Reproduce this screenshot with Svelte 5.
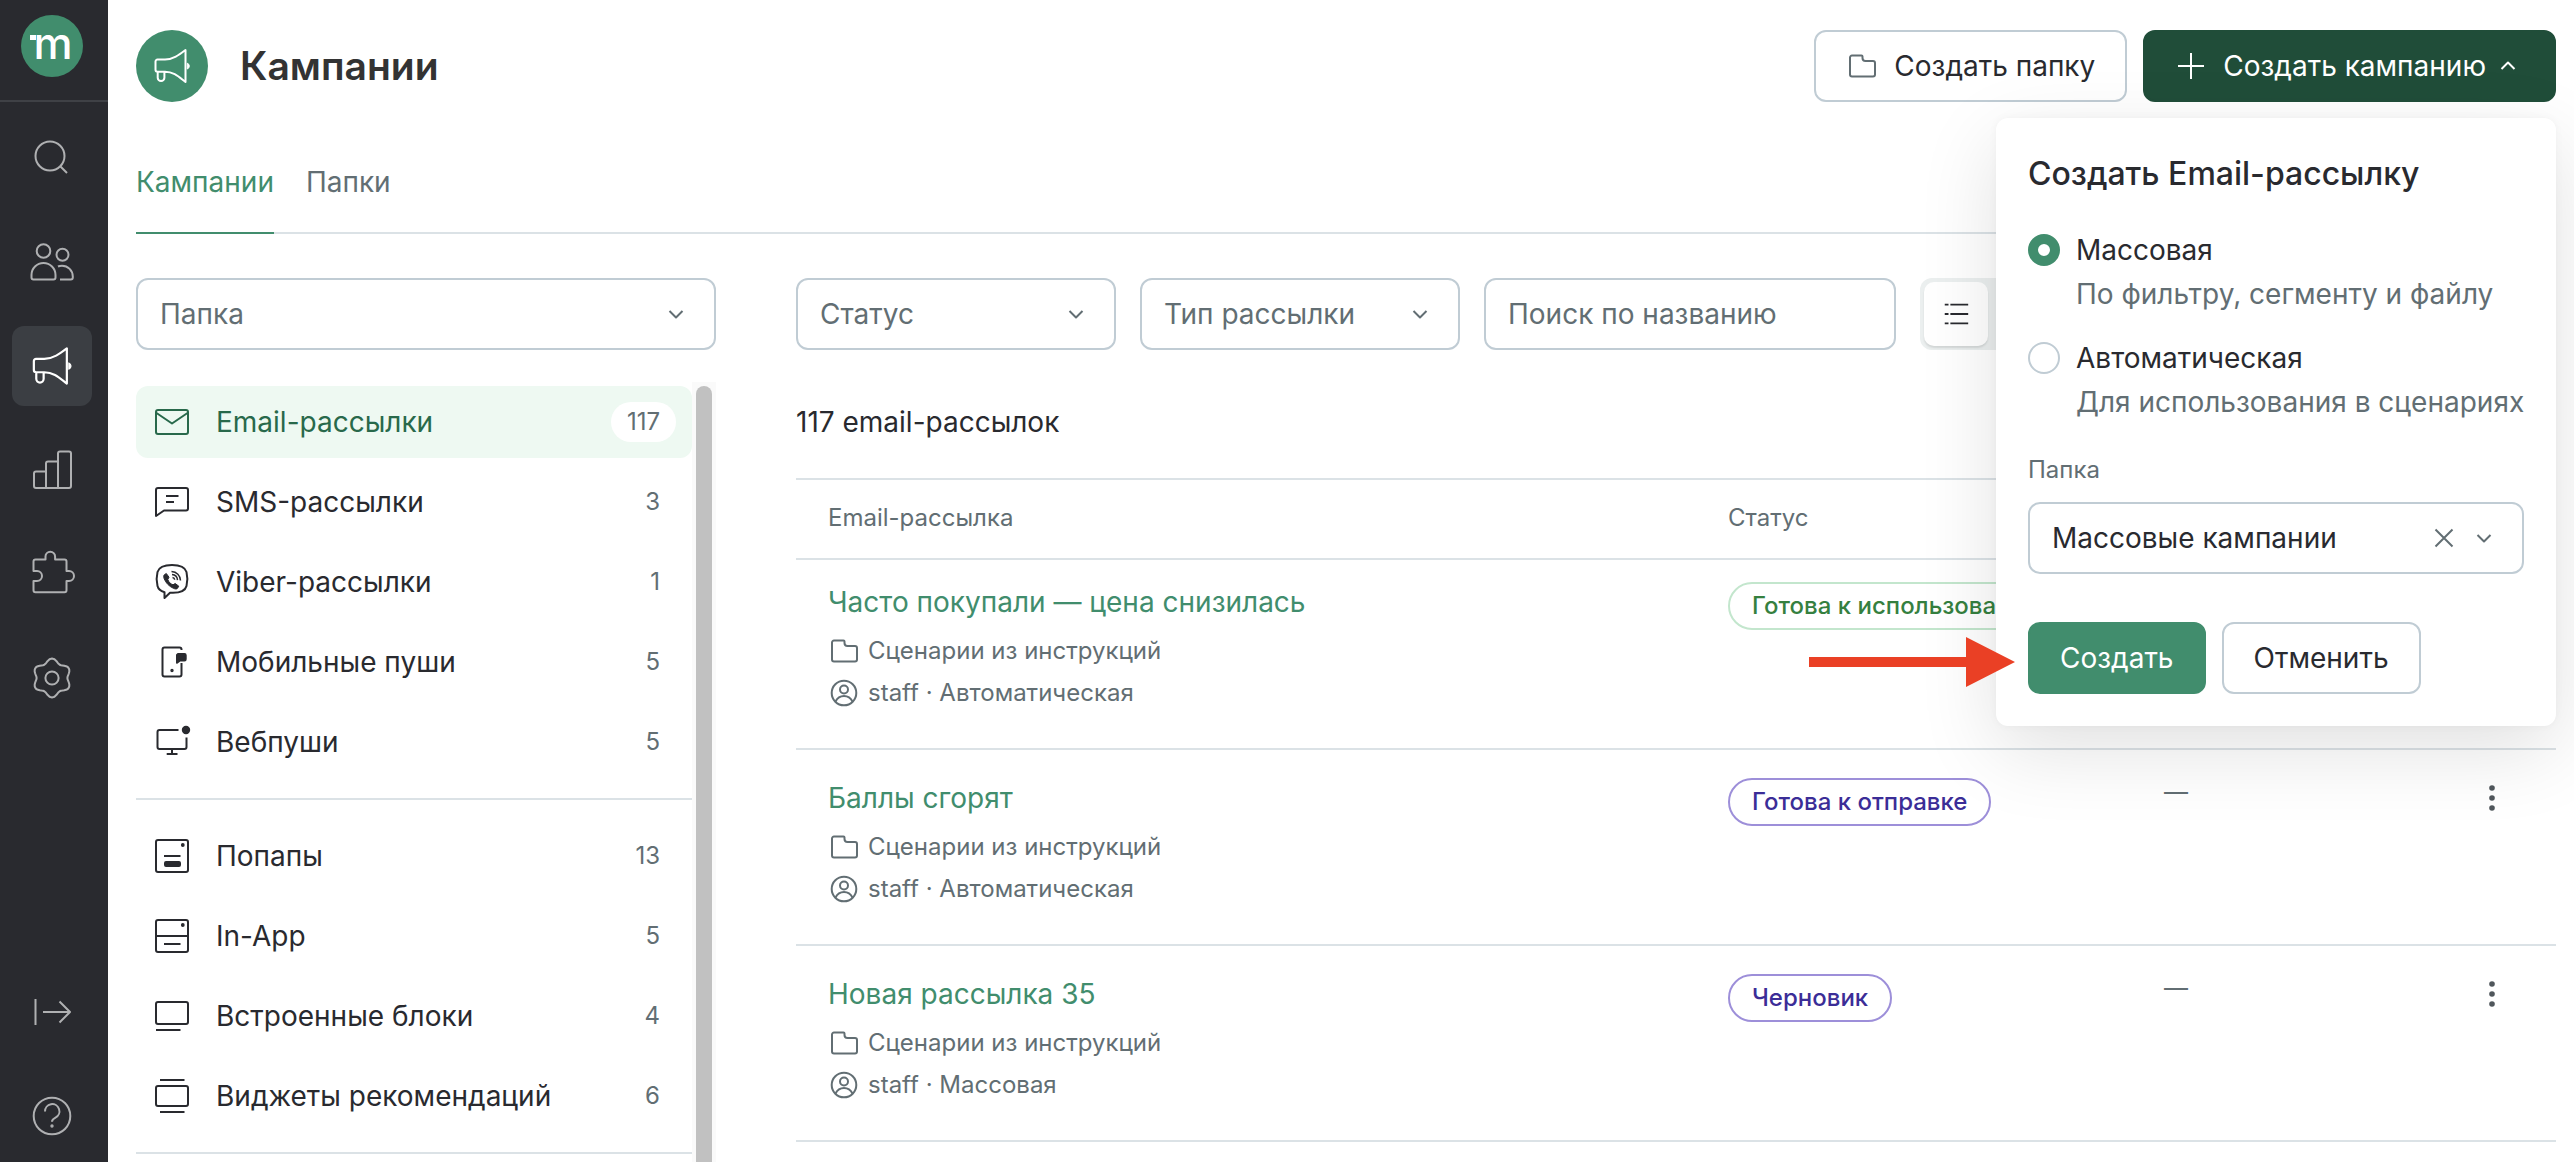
<script>
    const icons = {
        search: `<circle cx="22" cy="22" r="14.5"/><path d="M32 32l7 7"/>`,
        people: `<circle cx="15.5" cy="13" r="6.8"/><circle cx="34.5" cy="16.7" r="6"/><path d="M5.5 41.5h20a2 2 0 0 0 2-2V37a12 12 0 0 0-24 0v2.5a2 2 0 0 0 2 2zM30 28.5c1-.5 2.5-.8 4-.8a10.8 10.8 0 0 1 10.8 10.8v1a2 2 0 0 1-2 2H32"/>`,
        megaphone: `<path d="M3.5 15.5a2 2 0 0 1 2-2H13c8 0 14.5-5 20.5-9.5v32C27 31 22 25.7 13 25.7H5.5a2 2 0 0 1-2-2zM5.7 25.7v6a3.3 3.3 0 0 0 6.7 0v-6"/><path d="M35.3 17.2a3.1 3.1 0 0 1 0 5.8z" fill="currentColor" stroke-width="1"/>`,
        chart: `<path d="M18 42V17.5a2 2 0 0 1 2-2h10M30 42V7.5a2 2 0 0 1 2-2h9a2 2 0 0 1 2 2V40a2 2 0 0 1-2 2H8a2 2 0 0 1-2-2V27.5a2 2 0 0 1 2-2h10"/>`,
        puzzle: `<path d="M7.5 9.5h10v-3a4.8 4.8 0 0 1 9.6 0v3h9.4a2 2 0 0 1 2 2V21H41a5 5 0 0 1 0 10h-2.5v9.3a2 2 0 0 1-2 2h-29a2 2 0 0 1-2-2v-9.3H9a5 5 0 0 0 0-10H5.5V11.5a2 2 0 0 1 2-2z"/>`,
        gear: `<circle cx="24" cy="24" r="6.6"/><path d="${gearPath()}"/>`,
        expand: `<path d="M7.5 11v26M15 24h27M31.5 13.5L42 24 31.5 34.5"/>`,
        help: `<circle cx="24" cy="24" r="18.3"/><path d="M17 19.5a7.2 7.2 0 1 1 10.5 6.2c-2.2 1.2-3.5 2-3.5 4"/><circle cx="24" cy="34" r=".7" fill="currentColor"/>`,
        email: `<rect x="4" y="8" width="32" height="24" rx="2"/><path d="M4.500 11L20 21.500 35.500 11"/>`,
        sms: `<path d="M6 6h28a2 2 0 0 1 2 2v18.500a2 2 0 0 1-2 2H12L4 34V8a2 2 0 0 1 2-2zM14 14h12.500M14 20h8"/>`,
        viber: `<path d="M20 3c9 0 13 2 14.500 7 1 4 1 10 0 14-1.300 5-6 7-14.500 6.800h-2L12.500 36v-5.800C8.500 29 6.300 27.300 5.500 24c-1-4-1-10 0-14C7 5 11 3 20 3z"/><path d="M12.300 12.800l2-1.300 2.700 3.700-1.200 2.300c1 2.800 2.500 4.200 5.200 5.300l2.200-1.300 3.600 2.700-1.400 2.200c-1.200 1-2.600.5-4-.1-4.400-2-7.400-5.200-9.200-9.500-.6-1.600-.8-3 .1-4z" fill="currentColor" stroke-width="1"/><path d="M19.500 9.500c5.200.2 8.800 4 9 9M20 12.600c3.200.3 5.300 2.400 5.500 5.500M20.500 15.600c1.400.2 2.100.9 2.200 2.200" stroke-width="1.500"/>`,
        mobile: `<path d="M29.500 8v-.5a2 2 0 0 0-2-2h-15a2 2 0 0 0-2 2v25a2 2 0 0 0 2 2h15a2 2 0 0 0 2-2V21"/><path d="M26 12h6.500a1.200 1.200 0 0 1 1.200 1.200v4a1.200 1.200 0 0 1-1.200 1.200H28l-3 2.400V13z" fill="currentColor"/><circle cx="20" cy="28.500" r=".7" fill="currentColor"/>`,
        web: `<path d="M26.500 8h-19a2 2 0 0 0-2 2v15a2 2 0 0 0 2 2h25a2 2 0 0 0 2-2v-9.500M20 27v5M14.700 32h10.800"/><circle cx="34" cy="8" r="3.200" fill="currentColor"/>`,
        popup: `<rect x="4" y="4" width="32" height="32" rx="2"/><circle cx="30.800" cy="9" r=".9" fill="currentColor"/><path d="M12 20h16.500"/><rect x="13" y="26" width="15" height="4" rx="1" fill="currentColor"/>`,
        inapp: `<rect x="4" y="4" width="32" height="32" rx="2"/><circle cx="30.800" cy="9" r=".9" fill="currentColor"/><path d="M4 20h32M12 28h16.500"/>`,
        blocks: `<rect x="4" y="6" width="32" height="22" rx="2"/><path d="M4 34h24.500"/>`,
        widgets: `<rect x="4" y="10" width="32" height="20" rx="2"/><path d="M8 4h24.500M8 36h24.500"/>`,
        folder: `<path d="M6 5.500h9.500a1 1 0 0 1 1 1V8a3 3 0 0 0 3 3H27a2 2 0 0 1 2 2v11.500a2 2 0 0 1-2 2H6a2 2 0 0 1-2-2v-17a2 2 0 0 1 2-2z"/>`,
        user: `<circle cx="16" cy="16" r="12.300"/><circle cx="16" cy="12.500" r="4"/><path d="M7.500 24.500c2-4 5-5.500 8.500-5.500s6.500 1.500 8.500 5.500"/>`,
        plus: `<path d="M16 3v26M3 16h26"/>`,
        down: `<path d="M9.500 13l6.500 6.500 6.500-6.500"/>`,
        up: `<path d="M9.500 19l6.500-6.500 6.500 6.500"/>`,
        cross: `<path d="M7.500 7.500l17 17M24.500 7.500l-17 17"/>`,
        list: `<path d="M4 6h4M10 6h19M4 16h4M10 16h19M4 26h4M10 26h19"/>`,
        dots: `<g fill="currentColor" stroke="none"><circle cx="16" cy="6" r="2.800"/><circle cx="16" cy="16" r="2.800"/><circle cx="16" cy="26" r="2.800"/></g>`,
    };

    // six soft teeth, one pointing up
    function gearPath() {
        let d = "";
        for (let i = 0; i < 72; i++) {
            const a = (i * Math.PI) / 36;
            const r = 17.4 + 2 * Math.cos(6 * a);
            d += (i ? "L" : "M") + (24 + r * Math.sin(a)).toFixed(1) + " " + (24 - r * Math.cos(a)).toFixed(1);
        }
        return d + "z";
    }

    const sections = [
        { icon: "search", title: "Поиск" },
        { icon: "people", title: "Клиенты" },
        { icon: "megaphone", title: "Кампании", active: true },
        { icon: "chart", title: "Отчеты" },
        { icon: "puzzle", title: "Интеграции" },
        { icon: "gear", title: "Настройки" },
    ];

    const groups = [
        [
            { icon: "email", name: "Email-рассылки", count: 117, active: true },
            { icon: "sms", name: "SMS-рассылки", count: 3 },
            { icon: "viber", name: "Viber-рассылки", count: 1 },
            { icon: "mobile", name: "Мобильные пуши", count: 5 },
            { icon: "web", name: "Вебпуши", count: 5 },
        ],
        [
            { icon: "popup", name: "Попапы", count: 13 },
            { icon: "inapp", name: "In-App", count: 5 },
            { icon: "blocks", name: "Встроенные блоки", count: 4 },
            { icon: "widgets", name: "Виджеты рекомендаций", count: 6 },
        ],
    ];

    const campaigns = [
        { name: "Часто покупали — цена снизилась", type: "Автоматическая", status: "Готова к использованию", ready: true },
        { name: "Баллы сгорят", type: "Автоматическая", status: "Готова к отправке" },
        { name: "Новая рассылка 35", type: "Массовая", status: "Черновик" },
    ];

    let kind = $state("mass");
    let open = $state(true);
</script>

{#snippet icon(name, size, box = size)}
    <svg
        class="icon"
        width={size}
        height={size}
        viewBox="0 0 {box} {box}"
        fill="none"
        stroke="currentColor"
        stroke-width="2"
        aria-hidden="true">{@html icons[name]}</svg
    >
{/snippet}

<div class="app">
    <aside class="sidebar">
        <a href="#home" class="logo" aria-label="Главная">
            <svg width="62" height="62" viewBox="0 0 62 62">
                <circle cx="31" cy="31" r="31" />
                <text x="32" y="44" text-anchor="middle">m</text>
                <rect x="9" y="20" width="6" height="5" />
            </svg>
        </a>
        <nav class="sections">
            {#each sections as s}
                <a href="#{s.icon}" class="section" class:active={s.active} aria-label={s.title}>
                    {#if s.icon == "megaphone"}
                        {@render icon(s.icon, 44, 40)}
                    {:else}
                        {@render icon(s.icon, 48)}
                    {/if}
                </a>
            {/each}
        </nav>
        <nav class="sections bottom">
            <a href="#expand" class="section" aria-label="Развернуть">{@render icon("expand", 48)}</a>
            <a href="#help" class="section" aria-label="Помощь">{@render icon("help", 48)}</a>
        </nav>
    </aside>

    <main>
        <header>
            <span class="round">{@render icon("megaphone", 40)}</span>
            <h1>Кампании</h1>
            <button class="btn outline">
                <span class="muted">{@render icon("folder", 32)}</span>
                Создать папку
            </button>
            <div class="create">
                <button class="btn dark" onclick={() => (open = !open)}>
                    {@render icon("plus", 32)}
                    Создать кампанию
                    <span class="caret">{@render icon("up", 32)}</span>
                </button>
                {#if open}
                    <form class="popup">
                        <h2>Создать Email-рассылку</h2>
                        <label class="option">
                            <input type="radio" name="kind" value="mass" bind:group={kind} />
                            <span>Массовая</span>
                            <small>По фильтру, сегменту и файлу</small>
                        </label>
                        <label class="option">
                            <input type="radio" name="kind" value="auto" bind:group={kind} />
                            <span>Автоматическая</span>
                            <small>Для использования в сценариях</small>
                        </label>
                        <label class="field-label" for="folder">Папка</label>
                        <div class="select filled">
                            <select id="folder">
                                <option>Массовые кампании</option>
                            </select>
                            <span class="marks">
                                {@render icon("cross", 32)}
                                {@render icon("down", 32)}
                            </span>
                        </div>
                        <div class="actions">
                            <button type="button" class="btn green">Создать</button>
                            <button type="button" class="btn outline" onclick={() => (open = false)}>Отменить</button>
                        </div>
                        <svg class="arrow" width="206" height="50" viewBox="0 0 206 50" aria-hidden="true">
                            <path d="M0 20h157V0l49 25-49 25V30H0z" />
                        </svg>
                    </form>
                {/if}
            </div>
        </header>

        <nav class="tabs">
            <a href="#campaigns" class="current">Кампании</a>
            <a href="#folders">Папки</a>
        </nav>

        <div class="columns">
            <div class="left">
                <div class="select">
                    <select aria-label="Папка">
                        <option>Папка</option>
                    </select>
                    <span class="marks">{@render icon("down", 32)}</span>
                </div>
                <div class="channels">
                    <nav>
                        {#each groups as group}
                            <div class="group">
                                {#each group as c}
                                    <a href="#{c.icon}" class="channel" class:active={c.active}>
                                        {@render icon(c.icon, 40)}
                                        {c.name}
                                        <span class="count">{c.count}</span>
                                    </a>
                                {/each}
                            </div>
                        {/each}
                    </nav>
                    <div class="track"><div class="thumb"></div></div>
                </div>
            </div>

            <div class="right">
                <div class="filters">
                    <div class="select">
                        <select aria-label="Статус">
                            <option>Статус</option>
                        </select>
                        <span class="marks">{@render icon("down", 32)}</span>
                    </div>
                    <div class="select">
                        <select aria-label="Тип рассылки">
                            <option>Тип рассылки</option>
                        </select>
                        <span class="marks">{@render icon("down", 32)}</span>
                    </div>
                    <input type="text" placeholder="Поиск по названию" aria-label="Поиск по названию" />
                    <div class="toggle">
                        <button aria-label="Список">{@render icon("list", 30, 32)}</button>
                    </div>
                </div>
                <p class="total">117 email-рассылок</p>
                <table>
                    <thead>
                        <tr>
                            <th class="name">Email-рассылка</th>
                            <th class="status">Статус</th>
                            <th></th>
                            <th class="menu"></th>
                        </tr>
                    </thead>
                    <tbody>
                        {#each campaigns as c}
                            <tr>
                                <td>
                                    <a href="#campaign" class="title">{c.name}</a>
                                    <div class="meta">{@render icon("folder", 32)} Сценарии из инструкций</div>
                                    <div class="meta">{@render icon("user", 32)} staff · {c.type}</div>
                                </td>
                                <td><span class="badge" class:ready={c.ready}>{c.status}</span></td>
                                <td class="dash">—</td>
                                <td><button class="dots" aria-label="Действия">{@render icon("dots", 32)}</button></td>
                            </tr>
                        {/each}
                    </tbody>
                </table>
            </div>
        </div>
    </main>
</div>

<style>
    :global(body) {
        background: #fff;
        color: #292a2f;
        font-family: Inter, "Liberation Sans", sans-serif;
        font-size: 28px;
        line-height: 40px;
    }

    .app,
    .app * {
        box-sizing: border-box;
    }

    .app {
        display: flex;
        height: 100vh;
        overflow: hidden;
    }

    a {
        color: inherit;
        text-decoration: none;
    }

    button,
    input,
    select {
        font: inherit;
        color: inherit;
    }

    .icon {
        display: block;
        flex: none;
        stroke-linejoin: round;
    }

    .sidebar {
        display: flex;
        flex-direction: column;
        flex: none;
        width: 108px;
        background: #292a2f;
        color: #afb0b2;
    }

    .logo {
        height: 102px;
        padding: 15px 0 0 21px;
        border-bottom: 2px solid #3f4146;
    }

    .logo svg {
        display: block;
    }

    .logo circle {
        fill: #418d6d;
    }

    .logo text,
    .logo rect {
        fill: #fff;
    }

    .logo text {
        font-size: 44px;
        font-weight: 500;
    }

    .sections {
        display: flex;
        flex-direction: column;
        gap: 24px;
        padding: 16px 16px 0 12px;
    }

    .sections.bottom {
        margin-top: auto;
        padding-bottom: 6px;
    }

    .section {
        display: flex;
        align-items: center;
        justify-content: center;
        height: 80px;
        border-radius: 12px;
    }

    .section.active {
        background: #3b3e43;
        color: #fff;
    }

    main {
        display: flex;
        flex-direction: column;
        flex: 1;
        min-width: 0;
        padding: 30px 18px 0 28px;
    }

    header {
        display: flex;
        align-items: center;
        gap: 16px;
    }

    .round {
        display: flex;
        align-items: center;
        justify-content: center;
        width: 72px;
        height: 72px;
        border-radius: 50%;
        background: #418d6d;
        color: #fff;
    }

    h1 {
        margin: 0 auto 0 16px;
        color: #333;
        font-size: 39px;
        font-weight: 600;
        line-height: 72px;
    }

    .btn {
        display: flex;
        align-items: center;
        gap: 16px;
        height: 72px;
        padding: 0 30px;
        border: 2px solid transparent;
        border-radius: 12px;
        background: #fff;
        white-space: nowrap;
        cursor: pointer;
    }

    .btn.outline {
        border-color: #c0ccd4;
    }

    .btn.dark {
        background: #204d39;
        border-color: #204d39;
        color: #fff;
    }

    .btn.green {
        background: #418d6d;
        border-color: #418d6d;
        color: #fff;
    }

    .muted {
        color: #626e73;
    }

    .caret {
        margin-left: -10px;
    }

    .create {
        position: relative;
    }

    .popup {
        position: absolute;
        top: 88px;
        right: 0;
        z-index: 1;
        width: 560px;
        padding: 32px;
        border-radius: 12px;
        background: #fff;
        box-shadow:
            0 0 8px rgba(0, 0, 0, 0.04),
            0 24px 80px rgba(0, 0, 0, 0.12);
    }

    h2 {
        margin: 0 0 30px;
        font-size: 32px;
        font-weight: 500;
        line-height: 48px;
    }

    .option {
        display: grid;
        grid-template-columns: 32px auto;
        column-gap: 16px;
        align-items: center;
        margin-bottom: 20px;
        line-height: 44px;
        white-space: nowrap;
    }

    .option input {
        appearance: none;
        width: 32px;
        height: 32px;
        margin: 0;
        border: 2px solid #c0ccd4;
        border-radius: 50%;
    }

    .option input:checked {
        border: 10px solid #418d6d;
    }

    .option small {
        grid-column: 2;
        color: #626e73;
        font-size: 28px;
    }

    .field-label {
        display: block;
        margin: 26px 0 12px;
        color: #626e73;
        font-size: 24px;
    }

    .select {
        display: grid;
        color: #626e73;
    }

    .select.filled select {
        color: #292a2f;
    }

    select,
    .filters input {
        width: 100%;
        height: 72px;
        padding: 0 22px;
        border: 2px solid #c0ccd4;
        border-radius: 12px;
        background: #fff;
    }

    select {
        grid-area: 1 / 1;
        appearance: none;
    }

    .marks {
        display: flex;
        grid-area: 1 / 1;
        gap: 8px;
        align-self: center;
        justify-self: end;
        padding-right: 24px;
        pointer-events: none;
    }

    .actions {
        display: flex;
        gap: 16px;
        margin-top: 48px;
    }

    .arrow {
        position: absolute;
        left: -187px;
        bottom: 39px;
        fill: #ea4025;
    }

    .tabs {
        display: flex;
        gap: 32px;
        margin-top: 60px;
        border-bottom: 2px solid #dbe2e6;
        color: #626e73;
    }

    .tabs a {
        margin-bottom: -2px;
        padding-bottom: 30px;
        border-bottom: 2px solid transparent;
    }

    .tabs .current {
        border-color: #418d6d;
        color: #418d6d;
    }

    .columns {
        display: flex;
        gap: 80px;
        flex: 1;
        min-height: 0;
        padding-top: 44px;
    }

    .left {
        display: flex;
        flex-direction: column;
        gap: 32px;
        flex: none;
        width: 580px;
    }

    .channels {
        display: flex;
        flex: 1;
        min-height: 0;
    }

    .channels nav {
        flex: 1;
        padding-top: 4px;
    }

    .group {
        display: flex;
        flex-direction: column;
        gap: 8px;
        margin-bottom: 20px;
        padding-bottom: 20px;
        border-bottom: 2px solid #dbe2e6;
    }

    .channel {
        display: flex;
        align-items: center;
        gap: 24px;
        height: 72px;
        padding: 0 16px;
        border-radius: 12px;
    }

    .channel.active {
        background: #eef9f2;
        color: #28694b;
    }

    .count {
        margin-left: auto;
        padding: 0 16px;
        border-radius: 20px;
        color: #626e73;
        font-size: 24px;
    }

    .active .count {
        background: #fff;
    }

    .track {
        width: 24px;
        padding: 4px 4px 0;
        background: #fafafa;
    }

    .thumb {
        height: 100%;
        border-radius: 8px 8px 0 0;
        background: #c1c1c1;
    }

    .right {
        flex: 1;
        min-width: 0;
    }

    .filters {
        display: flex;
        gap: 24px;
    }

    .filters .select {
        width: 320px;
    }

    .filters input {
        width: 412px;
    }

    .filters input::placeholder {
        color: #626e73;
        opacity: 1;
    }

    .toggle {
        width: 140px;
        height: 72px;
        padding: 4px;
        border-radius: 12px;
        background: #ebefef;
    }

    .toggle button {
        display: flex;
        align-items: center;
        justify-content: center;
        width: 64px;
        height: 64px;
        padding: 0;
        border: 0;
        border-radius: 10px;
        background: #fff;
        box-shadow: 0 2px 2px rgba(0, 0, 0, 0.1);
    }

    .total {
        margin: 52px 0 36px;
    }

    table {
        width: 100%;
        border-spacing: 0;
        table-layout: fixed;
    }

    th {
        height: 82px;
        padding: 0 32px 2px;
        border: solid #dbe2e6;
        border-width: 2px 0;
        color: #626e73;
        font-size: 24px;
        font-weight: 400;
        text-align: left;
    }

    .name {
        width: 900px;
    }

    .status {
        width: 436px;
    }

    .menu {
        width: 128px;
    }

    td {
        padding: 28px 32px 34px;
        border-bottom: 2px solid #dbe2e6;
        vertical-align: top;
    }

    tbody tr:first-child td {
        padding-top: 22px;
    }

    .title {
        display: block;
        margin-bottom: 8px;
        color: #418d6d;
    }

    .meta {
        display: flex;
        align-items: center;
        gap: 8px;
        color: #626e73;
        font-size: 24px;
        line-height: 42px;
    }

    .badge {
        display: inline-block;
        padding: 0 22px;
        border: 2px solid #9d8fd9;
        border-radius: 24px;
        color: #3b2d97;
        font-size: 24px;
        font-weight: 500;
        line-height: 44px;
        white-space: nowrap;
    }

    .badge.ready {
        border-color: #c3e6cd;
        color: #35803f;
    }

    .dash {
        color: #626e73;
        font-size: 24px;
        line-height: 28px;
    }

    .dots {
        display: flex;
        align-items: center;
        justify-content: center;
        width: 64px;
        height: 40px;
        padding: 0;
        border: 0;
        background: none;
        color: #50575c;
    }
</style>
